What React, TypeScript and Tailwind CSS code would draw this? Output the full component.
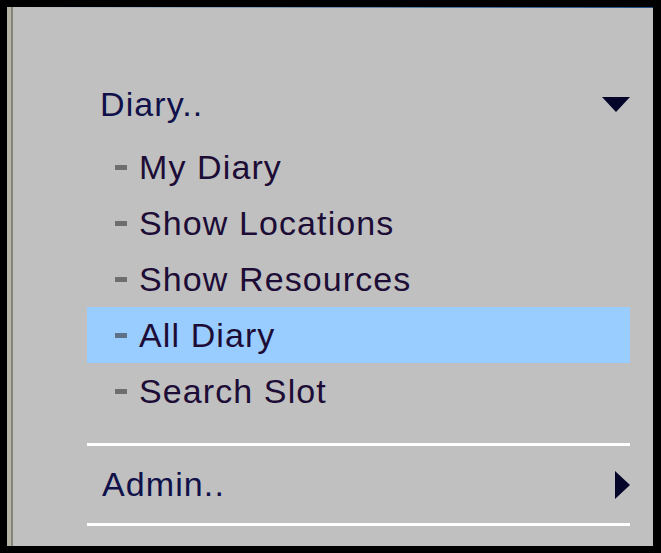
import React from "react";

const items = ["My Diary", "Show Locations", "Show Resources", "All Diary", "Search Slot"];
const active = "All Diary";

function DownArrow() {
  return (
    <svg width="28" height="15" viewBox="0 0 28 15" className="block">
      <polygon points="0,0 28,0 14,15" fill="#05052a" />
    </svg>
  );
}

function RightArrow() {
  return (
    <svg width="15" height="28" viewBox="0 0 15 28" className="block">
      <polygon points="0,0 15,14 0,28" fill="#05052a" />
    </svg>
  );
}

export default function App() {
  return (
    <div className="flex h-[553px] w-[661px] bg-black pb-[7px] pl-[7px] pr-[8px] pt-[7px] font-['Liberation_Sans',Arial,sans-serif] tracking-[1.1px]">
      <div className="w-[4px] bg-[#b6b4a4]" />
      <div className="w-[2px] bg-[#87857a]" />
      <div className="flex flex-1 flex-col bg-[#c0c0c0]">
        <div className="h-px bg-gradient-to-r from-[#c0c0c0] via-[#6d8fb0] to-[#1f4f80]" />
        <div className="flex flex-1 flex-col pl-[74px] pr-[23px] pt-[68px]">
          <div className="flex h-[56px] items-center justify-between pl-[13px] text-[34px] leading-[56px] text-[#10104a]">
            <span>Diary..</span>
            <DownArrow />
          </div>
          <ul className="mt-[7px] flex flex-col">
            {items.map((item) => {
              const on = item === active;
              return (
                <li
                  key={item}
                  className={
                    on
                      ? "flex h-[56px] items-center bg-[#99ccff] pl-[28px] text-[34px] leading-[56px] text-[#1c0c36]"
                      : "flex h-[56px] items-center pl-[28px] text-[34px] leading-[56px] text-[#1c0c36]"
                  }
                >
                  <span className={on ? "mr-[12px] h-[5px] w-[12px] bg-[#5d7286]" : "mr-[12px] h-[5px] w-[12px] bg-[#6e6e6e]"} />
                  <span>{item}</span>
                </li>
              );
            })}
          </ul>
          <div className="mt-[24px] h-[3px] bg-white" />
          <div className="flex h-[77px] items-center justify-between pl-[15px] text-[34px] text-[#10104a]">
            <span>Admin..</span>
            <RightArrow />
          </div>
          <div className="h-[3px] bg-white" />
        </div>
      </div>
    </div>
  );
}
